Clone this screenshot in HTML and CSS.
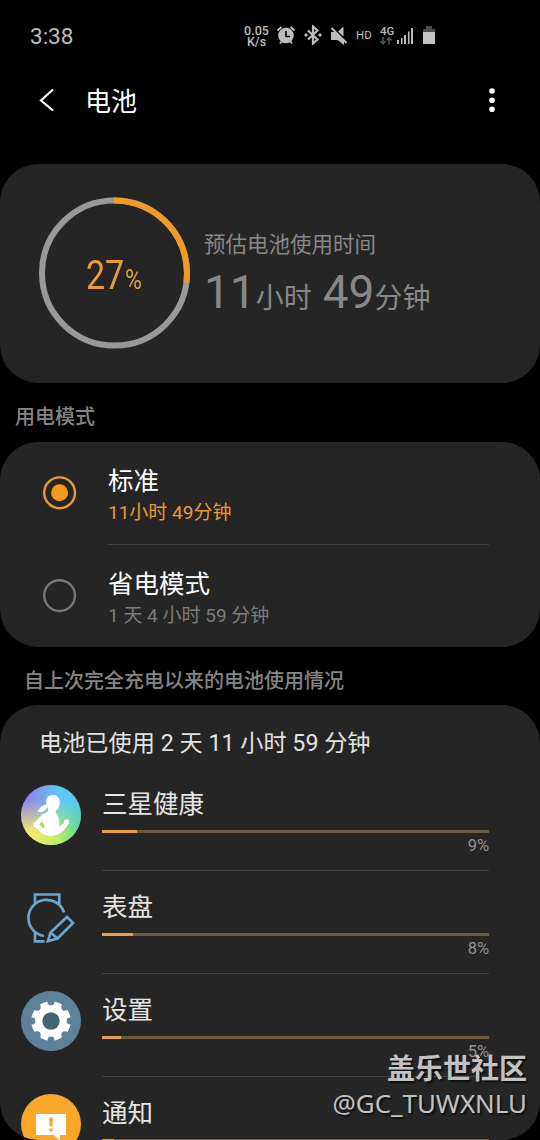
FILE: index.html
```html
<!DOCTYPE html>
<html lang="zh-CN">
<head>
<meta charset="utf-8">
<title>电池</title>
<link rel="stylesheet" href="styles.css">
</head>
<body>
<div class="screen">
  <header class="status">
    <span class="clock">3:38</span>
    <div class="indicators">
      <span class="speed"><span>0.05</span><span>K/s</span></span>
      <svg class="alarm" width="20" height="20" viewBox="0 0 20 20"><g stroke="#bdbdbd" stroke-width="2" fill="none"><path d="M1.500 5.500L5.500 2M14.500 2L18.500 5.500M4 18.500L6 16M16 18.500L14 16"/></g><circle cx="10" cy="10.500" r="7.800" fill="#bdbdbd"/><path d="M10 6v5.500h4" stroke="#000" stroke-width="1.600" fill="none"/></svg>
      <svg class="bt" width="18" height="20" viewBox="0 0 18 20"><path d="M4 5.500L13.500 14.500L9 18.500V1.500L13.500 5.500L4 14.500" fill="none" stroke="#bdbdbd" stroke-width="2.200"/><path d="M0 10l2-2L4 10l-2 2zM14 10l2-2L18 10l-2 2z" fill="#bdbdbd"/></svg>
      <svg class="mute" width="18" height="20" viewBox="0 0 18 20"><path d="M1 6h4l9 9v4L7.500 14H1zM8 5.500l5.500-5v10z" fill="#bdbdbd"/><path d="M1.500 2L16.500 17" stroke="#bdbdbd" stroke-width="2"/></svg>
      <span class="hd">HD</span>
      <div class="net"><span>4G</span><svg width="12" height="8" viewBox="0 0 12 8"><path d="M3 0v6.500M.5 4L3 6.800L5.500 4M9 7.500V1M6.500 3.500L9 .8L11.500 3.500" fill="none" stroke="#555" stroke-width="1.500"/></svg></div>
      <svg class="signal" width="17" height="17" viewBox="0 0 17 17"><path d="M0 13h2v4H0zM4 11h1.500v6H4zM7 8h2v9H7zM11 4.500h1.500V17H11zM14 1h2v16h-2z" fill="#bdbdbd"/></svg>
      <svg class="cell" width="12" height="18" viewBox="0 0 12 18"><path d="M3 0h6v3h3v3H0V3h3z" fill="#4d4d4d"/><path d="M0 6h12v12H0z" fill="#c4c4c4"/></svg>
    </div>
  </header>

  <nav class="toolbar">
    <svg class="back" width="16" height="24" viewBox="0 0 16 24"><path d="M14 1.500L2 12.500L14 22.500" fill="none" stroke="#fff" stroke-width="2.200"/></svg>
    <h1>电池</h1>
    <svg class="more" width="6" height="24" viewBox="0 0 6 24"><circle cx="3" cy="3" r="2.800" fill="#fff"/><circle cx="3" cy="12.200" r="2.800" fill="#fff"/><circle cx="3" cy="21.200" r="2.800" fill="#fff"/></svg>
  </nav>

  <section class="card summary">
    <div class="gauge">
      <svg width="152" height="152" viewBox="0 0 152 152"><circle cx="76.500" cy="76" r="72.500" fill="none" stroke="#999" stroke-width="6"/><path d="M75.500 3.500H76.500A72.500 72.500 0 0 1 148.300 85.500" fill="none" stroke="#f09a27" stroke-width="6"/></svg>
      <div class="level"><span class="num">27</span><span class="pct">%</span></div>
    </div>
    <div class="estimate">
      <div class="caption">预估电池使用时间</div>
      <div class="remaining"><b>11</b><span class="hours">小时</span><b>49</b><span>分钟</span></div>
    </div>
  </section>

  <h2 class="modes-title">用电模式</h2>
  <section class="card modes">
    <div class="mode">
      <svg class="radio" width="34" height="34" viewBox="0 0 34 34"><circle cx="16.600" cy="16.800" r="15.400" fill="none" stroke="#e89a3a" stroke-width="2.400"/><circle cx="16.600" cy="16.800" r="8.500" fill="#f59a1d"/></svg>
      <div class="mode-text"><div class="name">标准</div><div class="sub active">11小时 49分钟</div></div>
    </div>
    <div class="mode">
      <svg class="radio" width="34" height="34" viewBox="0 0 34 34"><circle cx="16.600" cy="16.600" r="15.400" fill="none" stroke="#777" stroke-width="2.400"/></svg>
      <div class="mode-text"><div class="name">省电模式</div><div class="sub">1 天 4 小时 59 分钟</div></div>
    </div>
  </section>

  <h2 class="usage-title">自上次完全充电以来的电池使用情况</h2>
  <section class="card usage">
    <div class="used">电池已使用 2 天 11 小时 59 分钟</div>
    <div class="app">
      <svg class="icon" width="60" height="60" viewBox="0 0 60 60">
        <defs>
          <linearGradient id="sky" x1="0" y1="0" x2="1" y2="0"><stop offset=".1" stop-color="#9083e8"/><stop offset=".65" stop-color="#5cc8f4"/></linearGradient>
          <linearGradient id="grass" x1="0" y1="0" x2="1" y2="0"><stop offset=".2" stop-color="#f4ec6c"/><stop offset=".6" stop-color="#c5ec65"/><stop offset=".95" stop-color="#62db8c"/></linearGradient>
          <linearGradient id="fade" x1="0" y1="0" x2="0" y2="1"><stop offset=".25" stop-color="#000"/><stop offset=".8" stop-color="#fff"/></linearGradient>
          <mask id="lower"><rect width="60" height="60" fill="url(#fade)"/></mask>
        </defs>
        <circle cx="30" cy="30" r="30" fill="url(#sky)"/><circle cx="30" cy="30" r="30" fill="url(#grass)" mask="url(#lower)"/>
        <g fill="#fff"><path d="M25 17C25 12.500 28 10 32 10C36.500 10 39 13 38.700 18C38.500 23 36.500 25.500 34.500 25.500L35 28C38 31 38.500 36 38 42L43 38V35.500L46 34L48 35V38C45 44 41 47 37 49.500C32 51.500 26 51.500 22 49L12.500 41V38.500L22 29L27 26.500V24Z"/><path d="M26.500 19C19 20.500 19.500 24 16 26L18 27C23 27.500 25 24.500 27 21.500Z"/></g>
        <path d="M21 36L18 39.500L23 44C24.200 41.500 23 38.500 21 36Z" fill="#b9cf9a"/>
      </svg>
      <div class="detail"><div class="app-name">三星健康</div><div class="bar"><div class="fill" style="width:9%"></div></div><div class="share">9%</div></div>
    </div>
    <div class="app">
      <svg class="icon" width="60" height="60" viewBox="0 0 60 60"><g transform="translate(-.5 1)" fill="none" stroke="#68a5cf" stroke-width="2.700"><path d="M14.500 14.500V5.500H38.800V15.500M14.500 42.500V52.300H24M43.500 23.500A18.200 18.200 0 1 0 23.500 47"/><path d="M46.500 28L52.500 34L37 49.500L27.500 52L30 43.500ZM30 43.500L37 49.500"/></g></svg>
      <div class="detail"><div class="app-name">表盘</div><div class="bar"><div class="fill" style="width:8%"></div></div><div class="share">8%</div></div>
    </div>
    <div class="app">
      <svg class="icon" width="60" height="60" viewBox="0 0 60 60"><circle cx="30" cy="30" r="30" fill="#5c8199"/><circle cx="30" cy="30" r="19.800" fill="#fff"/><g fill="#5c8199"><circle cx="30" cy="11" r="3.400"/><circle cx="43.900" cy="16.100" r="3.600"/><circle cx="49" cy="30" r="3.400"/><circle cx="43.900" cy="43.900" r="3.600"/><circle cx="30" cy="49" r="3.400"/><circle cx="16.100" cy="43.900" r="3.600"/><circle cx="11" cy="30" r="3.400"/><circle cx="16.100" cy="16.100" r="3.600"/></g><circle cx="30" cy="30" r="8.700" fill="#456472"/></svg>
      <div class="detail"><div class="app-name">设置</div><div class="bar"><div class="fill" style="width:5%"></div></div><div class="share">5%</div></div>
    </div>
    <div class="app">
      <svg class="icon" width="60" height="60" viewBox="0 0 60 60"><circle cx="30" cy="30" r="30" fill="#f9a72b"/><path d="M15 20H45V41H39V47L33 41H15Z" fill="#fff"/><path d="M28 24.500Q30 21.500 32 24.500L31.200 32.500H28.800Z" fill="#f9a72b"/><circle cx="30" cy="36" r="1.800" fill="#f9a72b"/></svg>
      <div class="detail"><div class="app-name">通知</div><div class="bar"><div class="fill" style="width:3%"></div></div><div class="share"></div></div>
    </div>
  </section>
  <div class="watermark"><strong>盖乐世社区</strong><span>@GC_TUWXNLU</span></div>
</div>
</body>
</html>
```
FILE: styles.css
```css
* { box-sizing: border-box; }
body { margin: 0; background: #000; font-family: Roboto, "Noto Sans CJK SC", sans-serif; }
h1, h2 { margin: 0; font-weight: 400; }
svg { display: block; flex: none; }
.screen { position: relative; width: 540px; height: 1140px; overflow: hidden; background: #000; white-space: nowrap; }
.status { display: flex; height: 72px; padding-left: 30px; color: #bdbdbd; }
.clock { width: 214px; padding-top: 21px; font-size: 22.500px; line-height: 30px; }
.indicators { display: flex; align-items: flex-start; }
.speed { display: flex; flex-direction: column; align-items: center; width: 25px; padding-top: 25px; font-size: 12.500px; font-weight: 500; line-height: 11px; }
.alarm { margin: 25px 0 0 7px; }
.bt { margin: 25px 0 0 8px; }
.mute { margin: 26px 0 0 8px; }
.hd { margin-left: 8px; padding-top: 28px; font-size: 11.500px; line-height: 15px; width: 17px; }
.net { margin-left: 7px; padding-top: 25px; font-size: 11.500px; font-weight: 500; line-height: 12px; width: 16px; }
.signal { margin: 27px 0 0 1px; }
.cell { margin: 26px 0 0 9px; }
.toolbar { display: flex; align-items: center; height: 56px; padding: 0 45px 0 39px; }
h1 { flex: 1; margin-left: 30px; color: #fff; font-size: 26px; line-height: 38px; padding-top: 3px; }
.card { background: #252525; border-radius: 38px; }
.summary { display: flex; height: 219px; margin-top: 36px; padding: 33px 0 0 38px; }
.gauge { display: grid; width: 152px; height: 152px; }
.gauge > * { grid-area: 1 / 1; }
.level { display: flex; align-items: baseline; justify-content: center; color: #e99c3b; line-height: 48px; padding-top: 54px; transform: scaleX(.83); }
.num { font-size: 41px; }
.pct { margin-left: 1px; font-size: 28px; }
.estimate { margin-left: 14px; padding-top: 33px; color: #888; }
.caption { font-size: 21.500px; line-height: 30px; }
.remaining { display: flex; align-items: baseline; font-size: 28px; line-height: 64px; }
.remaining b { font-size: 46px; font-weight: 400; }
.hours { margin-right: 11px; }
.modes-title { height: 59px; padding: 19px 0 0 15px; color: #858585; font-size: 20px; font-weight: 500; line-height: 30px; }
.modes { height: 205px; }
.mode { display: flex; height: 103px; padding: 0 51px 0 43px; }
.radio { margin-top: 34px; }
.mode-text { flex: 1; margin-left: 31px; padding-top: 21px; }
.mode:first-child .mode-text { border-bottom: 1px solid #424242; }
.name { color: #fff; font-size: 25.500px; line-height: 36px; }
.sub { color: #7d7d7d; font-size: 19px; line-height: 28px; }
.active { color: #e99a37; }
.usage-title { height: 58px; padding: 19px 0 0 24px; color: #858585; font-size: 20px; font-weight: 500; line-height: 30px; }
.usage { height: 435px; overflow: hidden; }
.used { height: 63px; padding: 21px 0 0 39px; color: #e2e2e2; font-size: 23.200px; line-height: 34px; }
.app { display: flex; height: 103px; padding: 0 51px 0 21px; }
.icon { margin-top: 17px; }
.detail { flex: 1; margin-left: 21px; border-bottom: 1px solid #424242; padding-top: 18px; }
.app-name { height: 44px; color: #e5e5e5; font-size: 25.500px; line-height: 36px; }
.bar { height: 3px; background: #6e5943; }
.fill { height: 3px; background: #e9a046; }
.share { color: #929292; font-size: 16.500px; line-height: 26px; text-align: right; }
.watermark { position: absolute; right: 13px; bottom: 19px; display: flex; flex-direction: column; align-items: flex-end; color: #c2c2c2; text-shadow: 2px 2px 1px #111; }
.watermark strong { font-family: "Noto Sans CJK SC", sans-serif; font-size: 28px; line-height: 36px; }
.watermark span { font-family: "Noto Sans", sans-serif; font-size: 25.900px; line-height: 36px; }
```
